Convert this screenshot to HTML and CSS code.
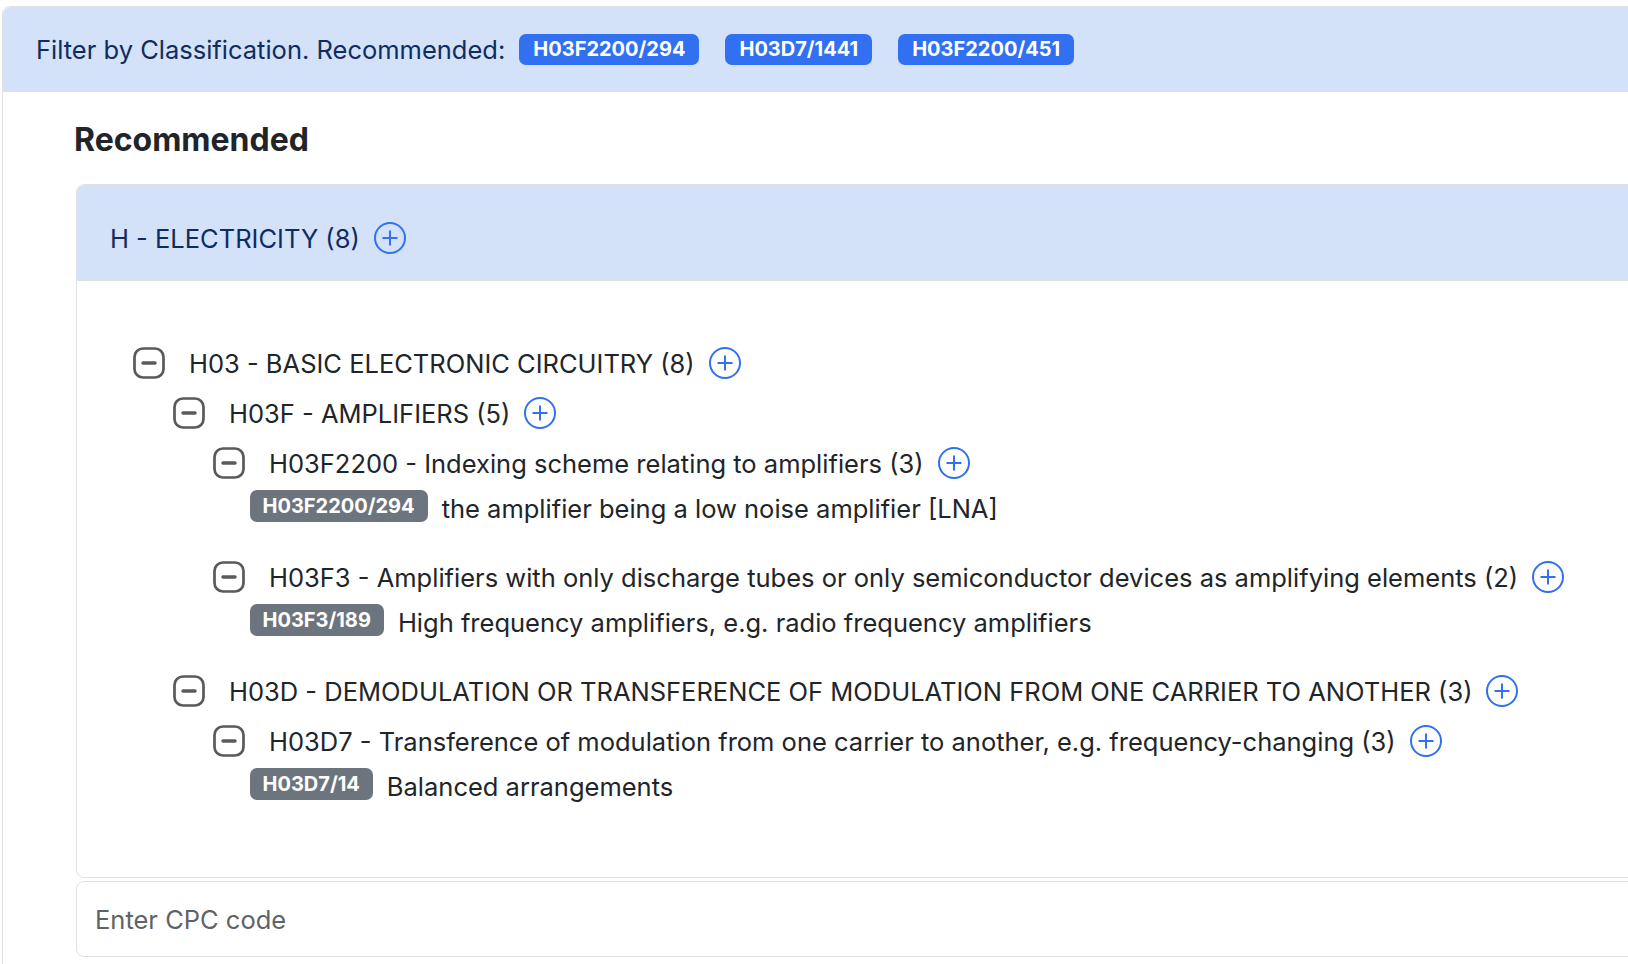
FILE: index.html
```html
<!DOCTYPE html>
<html lang="en">
<head>
    <meta charset="UTF-8">
    <meta name="viewport" content="width=device-width, initial-scale=1.0">
    <title>CPC Filter</title>
    <link rel="stylesheet" href="styles.css">
</head>
<body>
    <div class="panel">
        <div class="panel-header">
            <span class="panel-title">Filter by Classification. Recommended:</span>
            <span class="badge badge-blue">H03F2200/294</span>
            <span class="badge badge-blue">H03D7/1441</span>
            <span class="badge badge-blue">H03F2200/451</span>
        </div>

        <div class="panel-body">
            <h4 class="section-title">Recommended</h4>

            <div class="accordion">
                <div class="accordion-header">
                    <span>H - ELECTRICITY (8)</span>
                    <svg class="icon-plus" viewBox="0 0 32 32"><circle cx="16" cy="16" r="15"/><path d="M16 8.5v15M8.5 16h15"/></svg>
                </div>

                <div class="accordion-body">
                    <ul class="tree">
                        <li>
                            <div class="node">
                                <svg class="icon-minus" viewBox="0 0 32 32"><rect x="1.5" y="1.5" width="29" height="29" rx="8.5"/><path d="M10 16h12"/></svg>
                                <span>H03 - BASIC ELECTRONIC CIRCUITRY (8)</span>
                                <svg class="icon-plus" viewBox="0 0 32 32"><circle cx="16" cy="16" r="15"/><path d="M16 8.5v15M8.5 16h15"/></svg>
                            </div>
                            <ul>
                                <li>
                                    <div class="node">
                                        <svg class="icon-minus" viewBox="0 0 32 32"><rect x="1.5" y="1.5" width="29" height="29" rx="8.5"/><path d="M10 16h12"/></svg>
                                        <span>H03F - AMPLIFIERS (5)</span>
                                        <svg class="icon-plus" viewBox="0 0 32 32"><circle cx="16" cy="16" r="15"/><path d="M16 8.5v15M8.5 16h15"/></svg>
                                    </div>
                                    <ul>
                                        <li>
                                            <div class="node">
                                                <svg class="icon-minus" viewBox="0 0 32 32"><rect x="1.5" y="1.5" width="29" height="29" rx="8.5"/><path d="M10 16h12"/></svg>
                                                <span>H03F2200 - Indexing scheme relating to amplifiers (3)</span>
                                                <svg class="icon-plus" viewBox="0 0 32 32"><circle cx="16" cy="16" r="15"/><path d="M16 8.5v15M8.5 16h15"/></svg>
                                            </div>
                                            <div class="leaf">
                                                <span class="badge badge-gray">H03F2200/294</span>
                                                <span class="leaf-text">the amplifier being a low noise amplifier [LNA]</span>
                                            </div>
                                        </li>
                                        <li>
                                            <div class="node">
                                                <svg class="icon-minus" viewBox="0 0 32 32"><rect x="1.5" y="1.5" width="29" height="29" rx="8.5"/><path d="M10 16h12"/></svg>
                                                <span>H03F3 - Amplifiers with only discharge tubes or only semiconductor devices as amplifying elements (2)</span>
                                                <svg class="icon-plus" viewBox="0 0 32 32"><circle cx="16" cy="16" r="15"/><path d="M16 8.5v15M8.5 16h15"/></svg>
                                            </div>
                                            <div class="leaf">
                                                <span class="badge badge-gray">H03F3/189</span>
                                                <span class="leaf-text">High frequency amplifiers, e.g. radio frequency amplifiers</span>
                                            </div>
                                        </li>
                                    </ul>
                                </li>
                                <li>
                                    <div class="node">
                                        <svg class="icon-minus" viewBox="0 0 32 32"><rect x="1.5" y="1.5" width="29" height="29" rx="8.5"/><path d="M10 16h12"/></svg>
                                        <span>H03D - DEMODULATION OR TRANSFERENCE OF MODULATION FROM ONE CARRIER TO ANOTHER (3)</span>
                                        <svg class="icon-plus" viewBox="0 0 32 32"><circle cx="16" cy="16" r="15"/><path d="M16 8.5v15M8.5 16h15"/></svg>
                                    </div>
                                    <ul>
                                        <li>
                                            <div class="node">
                                                <svg class="icon-minus" viewBox="0 0 32 32"><rect x="1.5" y="1.5" width="29" height="29" rx="8.5"/><path d="M10 16h12"/></svg>
                                                <span>H03D7 - Transference of modulation from one carrier to another, e.g. frequency-changing (3)</span>
                                                <svg class="icon-plus" viewBox="0 0 32 32"><circle cx="16" cy="16" r="15"/><path d="M16 8.5v15M8.5 16h15"/></svg>
                                            </div>
                                            <div class="leaf">
                                                <span class="badge badge-gray">H03D7/14</span>
                                                <span class="leaf-text">Balanced arrangements</span>
                                            </div>
                                        </li>
                                    </ul>
                                </li>
                            </ul>
                        </li>
                    </ul>
                </div>
            </div>

            <input type="text" class="cpc-input" placeholder="Enter CPC code">
        </div>
    </div>
</body>
</html>
```
FILE: styles.css
```css
html, body {
    overflow: hidden;
}

body {
    margin: 0;
    font-family: Inter, "Noto Sans", sans-serif;
    font-size: 25.5px;
    color: #212529;
    background: #fff;
}

.panel {
    width: 1800px;
    margin: 6px 0 0 2px;
    border: 1px solid #dee2e6;
    border-radius: 8px;
    background: #fff;
}

.panel-header {
    display: flex;
    align-items: center;
    height: 85px;
    box-sizing: border-box;
    padding: 0 33px;
    background: #d3e1f9;
    border-bottom: 1px solid #dee2e6;
    border-radius: 8px 8px 0 0;
    color: #0f2c60;
}

.panel-title {
    margin-right: 14px;
}

.panel-header .badge + .badge {
    margin-left: 26px;
}

.badge {
    display: inline-flex;
    align-items: center;
    height: 32px;
    padding: 0 13px;
    border-radius: 7px;
    color: #fff;
    font-size: 20px;
    font-weight: 700;
    white-space: nowrap;
}

.badge-blue {
    height: 31px;
    padding: 0 14px;
    background: #3170f0;
}

.badge-gray {
    background: #6c757d;
}

.panel-body {
    padding: 29px 73px 40px 73px;
}

.section-title {
    margin: 0 0 25px -2px;
    font-size: 32px;
    font-weight: 700;
    line-height: 1.2;
    color: #212529;
}

.accordion {
    border: 1px solid #dee2e6;
    border-radius: 8px;
}

.accordion-header {
    display: flex;
    align-items: center;
    gap: 14px;
    padding: 37px 33px 26px;
    background: #d3e1f9;
    border-bottom: 1px solid #dee2e6;
    border-radius: 8px 8px 0 0;
    color: #0f2c60;
}

.accordion-body {
    padding: 57px 0 47px 56px;
}

.tree,
.tree ul {
    list-style: none;
    margin: 0;
    padding: 0;
}

.tree ul {
    padding-left: 40px;
}

.node {
    display: flex;
    align-items: center;
    height: 50px;
    white-space: nowrap;
}

.icon-minus {
    width: 32px;
    height: 32px;
    margin-right: 24px;
    flex-shrink: 0;
    fill: none;
    stroke: #5a5a5a;
    stroke-width: 2.7;
}

.icon-minus path {
    stroke-width: 3.4;
    stroke-linecap: round;
}

.icon-plus {
    width: 32px;
    height: 32px;
    flex-shrink: 0;
    fill: none;
    stroke: #3170f0;
    stroke-width: 2;
}

.node .icon-plus {
    margin-left: 14px;
}

.leaf {
    display: flex;
    align-items: center;
    gap: 14px;
    height: 36px;
    margin: 0 0 28px 36.5px;
    white-space: nowrap;
}

.leaf-text {
    padding-top: 4px;
}

.cpc-input {
    display: block;
    width: 100%;
    height: 76px;
    box-sizing: border-box;
    margin-top: 3px;
    padding: 0 18px;
    border: 1px solid #dee2e6;
    border-radius: 8px;
    font-family: inherit;
    font-size: 25.5px;
    color: #212529;
    background: #fff;
}

.cpc-input::placeholder {
    color: #5f6368;
}

.cpc-input:focus {
    outline: none;
}
```
